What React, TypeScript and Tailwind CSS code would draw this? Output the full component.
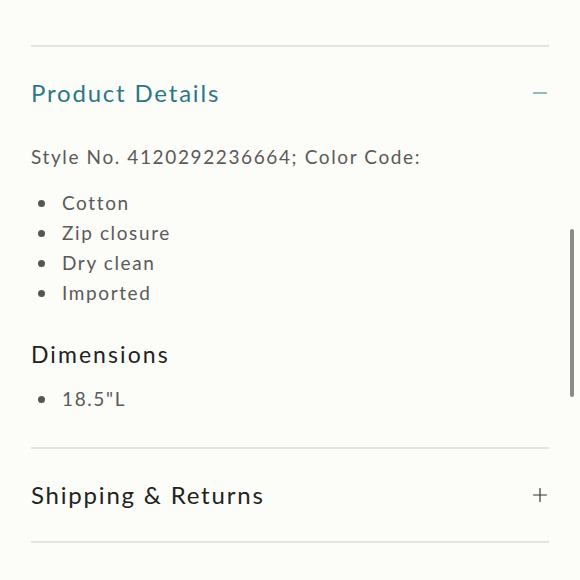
import { Minus, Plus } from "lucide-react";

const details = ["Cotton", "Zip closure", "Dry clean", "Imported"];

export default function App() {
  return (
    <div
      className="relative h-[580px] w-[580px] overflow-hidden bg-[#fcfcf8]"
      style={{ fontFamily: "Lato, 'Noto Sans', sans-serif" }}
    >
      <div className="px-[31px] pt-[45px]">
        <div className="h-[2px] bg-[#e4e4e0]" />
        <Section title="Product Details" open />
        <div className="pb-[33px] pt-[3px] text-[19px] tracking-[0.085em] text-[#5a5a5a]">
          <p className="leading-[30px]">Style No. 4120292236664; Color Code:</p>
          <BulletList items={details} className="mt-[16px]" />
          <h3 className="mt-[31px] text-[23px] leading-[30px] tracking-[0.09em] text-[#222]">
            Dimensions
          </h3>
          <BulletList items={['18.5"L']} className="mt-[15px]" />
        </div>
        <div className="h-[2px] bg-[#e4e4e0]" />
        <Section title="Shipping & Returns" />
        <div className="h-[2px] bg-[#e4e4e0]" />
      </div>
      <div className="absolute left-[570px] top-[229px] h-[168px] w-[4px] rounded-full bg-[#8a8a8a]" />
    </div>
  );
}

const Section = ({ title, open }: { title: string; open?: boolean }) => {
  return (
    <div className="flex h-[92px] items-center justify-between">
      <h2
        className={
          open
            ? "text-[24px] tracking-[0.075em] text-[#2b7786]"
            : "text-[24px] tracking-[0.075em] text-[#222]"
        }
      >
        {title}
      </h2>
      {open ? (
        <Minus size={22} strokeWidth={1.3} className="mr-[-2px] text-[#2b7786]" />
      ) : (
        <Plus size={22} strokeWidth={1.3} className="mr-[-2px] text-[#333]" />
      )}
    </div>
  );
};

const BulletList = ({
  items,
  className,
}: {
  items: string[];
  className?: string;
}) => {
  return (
    <ul className={className}>
      {items.map((item) => (
        <li key={item} className="flex h-[30px] items-center">
          <span className="ml-[7px] mr-[17px] h-[7px] w-[7px] rounded-full bg-[#555]" />
          {item}
        </li>
      ))}
    </ul>
  );
};
